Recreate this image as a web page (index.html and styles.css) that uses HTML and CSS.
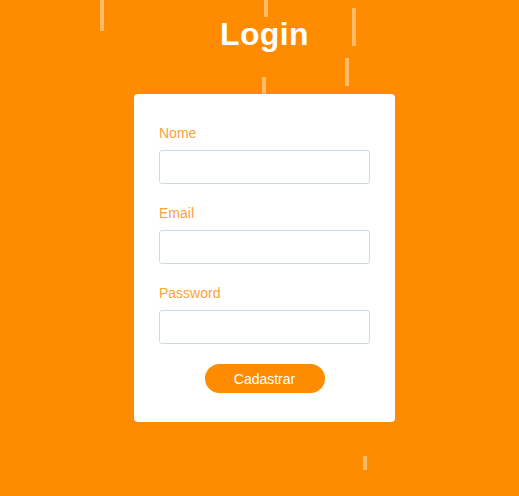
FILE: index.html
```html
<!DOCTYPE html>
<html lang="pt">
<head>
<meta charset="utf-8">
<title>Login</title>
<link rel="stylesheet" href="styles.css">
</head>
<body>
<div class="rain" aria-hidden="true">
  <span class="drop d1"></span>
  <span class="drop d2"></span>
  <span class="drop d3"></span>
  <span class="drop d4"></span>
  <span class="drop d5"></span>
  <span class="drop d6"></span>
</div>
<main class="page">
  <h1 class="title">Login</h1>
  <form class="card">
    <div class="field">
      <label class="label" for="nome">Nome</label>
      <input class="input" id="nome" type="text">
    </div>
    <div class="field">
      <label class="label" for="email">Email</label>
      <input class="input" id="email" type="email">
    </div>
    <div class="field">
      <label class="label" for="password">Password</label>
      <input class="input" id="password" type="password">
    </div>
    <button class="button" type="button">Cadastrar</button>
  </form>
</main>
</body>
</html>
```

FILE: styles.css
```css
html, body {
  margin: 0;
  padding: 0;
}
body {
  background: #ff8c00;
  font-family: "Liberation Sans", Arial, sans-serif;
  width: 519px;
  height: 496px;
  overflow: hidden;
  position: relative;
}
.rain {
  position: absolute;
  inset: 0;
  z-index: 0;
}
.drop {
  position: absolute;
  width: 4px;
  background: rgba(255, 255, 255, 0.4);
}
.d1 { left: 100px; top: 0; height: 31px; }
.d2 { left: 264px; top: 0; height: 17px; }
.d3 { left: 352px; top: 8px; height: 38px; }
.d4 { left: 345px; top: 58px; height: 28px; }
.d5 { left: 262px; top: 77px; height: 30px; }
.d6 { left: 363px; top: 456px; height: 14px; }

.page {
  position: relative;
  z-index: 1;
  display: flex;
  flex-direction: column;
  align-items: center;
  padding-left: 10px;
}
.title {
  margin: 18px 0 0;
  font-size: 32px;
  line-height: 32px;
  font-weight: bold;
  color: #fff;
  letter-spacing: 0.4px;
}
.card {
  margin-top: 44px;
  width: 211px;
  padding: 31px 25px 29px;
  background: #fff;
  border-radius: 4px;
  display: flex;
  flex-direction: column;
}
.field {
  display: flex;
  flex-direction: column;
  margin-bottom: 21px;
}
.field:last-of-type {
  margin-bottom: 20px;
}
.label {
  font-size: 14px;
  line-height: 16px;
  color: #f8a33a;
  margin-bottom: 9px;
}
.input {
  box-sizing: border-box;
  width: 211px;
  height: 34px;
  margin: 0;
  border: 1px solid #c9dce8;
  border-radius: 3px;
  background: #fff;
  outline: none;
}
.button {
  align-self: center;
  width: 120px;
  height: 29px;
  border: none;
  border-radius: 15px;
  background: #ff8c00;
  color: #fff;
  font-family: "Liberation Sans", Arial, sans-serif;
  font-size: 14px;
  padding: 0;
}
```
